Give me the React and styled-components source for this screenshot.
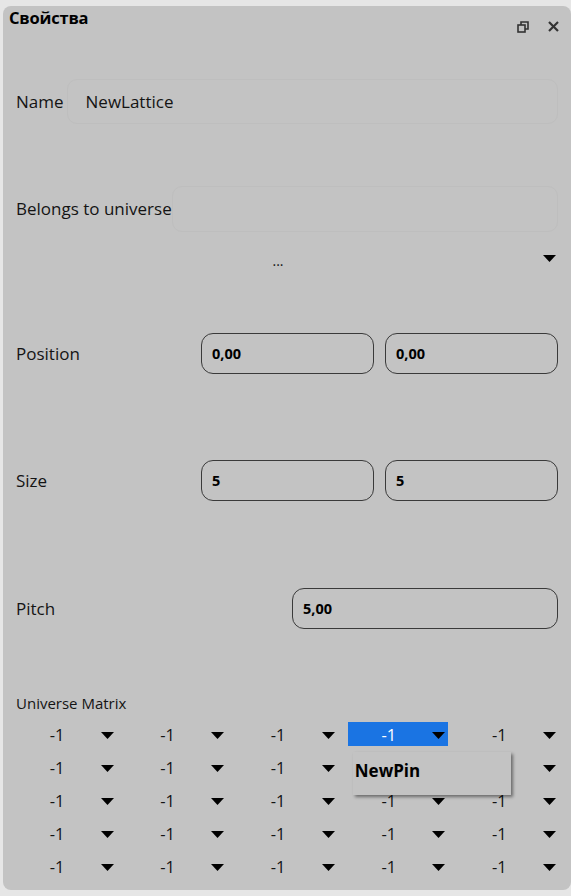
import styled, { createGlobalStyle } from 'styled-components';

const GlobalStyle = createGlobalStyle`
  html, body {
    margin: 0;
    padding: 0;
    background: #e6e6e6;
  }
  body {
    font-family: 'Open Sans', 'Noto Sans', sans-serif;
    color: #161616;
  }
`;

const matrix = [
  [-1, -1, -1, -1, -1],
  [-1, -1, -1, -1, -1],
  [-1, -1, -1, -1, -1],
  [-1, -1, -1, -1, -1],
  [-1, -1, -1, -1, -1],
];

function Arrow({ color = '#000' }) {
  return (
    <svg width="13" height="7" viewBox="0 0 13 7">
      <polygon points="0,0 13,0 6.5,7" fill={color} />
    </svg>
  );
}

function RestoreIcon() {
  return (
    <svg width="12" height="12" viewBox="0 0 12 12" fill="none" stroke="#333" strokeWidth="1.6">
      <rect x="1" y="4" width="7" height="7" />
      <polyline points="4,4 4,1 11,1 11,8 8,8" />
    </svg>
  );
}

function CloseIcon() {
  return (
    <svg width="11" height="11" viewBox="0 0 11 11" stroke="#333" strokeWidth="2.2">
      <line x1="1" y1="1" x2="10" y2="10" />
      <line x1="10" y1="1" x2="1" y2="10" />
    </svg>
  );
}

export default function App() {
  return (
    <>
      <GlobalStyle />
      <Panel>
        <Header>
          <Title>Свойства</Title>
          <HeaderButtons>
            <IconButton>
              <RestoreIcon />
            </IconButton>
            <IconButton>
              <CloseIcon />
            </IconButton>
          </HeaderButtons>
        </Header>

        <NameRow>
          <Label>Name</Label>
          <FaintBox>NewLattice</FaintBox>
        </NameRow>

        <BelongsRow>
          <Label>Belongs to universe</Label>
          <FaintBox />
        </BelongsRow>

        <ComboRow>
          <ComboText>...</ComboText>
          <ArrowBox>
            <Arrow />
          </ArrowBox>
        </ComboRow>

        <PairRow $top={58}>
          <Label>Position</Label>
          <Field>0,00</Field>
          <Field>0,00</Field>
        </PairRow>

        <PairRow $top={86}>
          <Label>Size</Label>
          <Field>5</Field>
          <Field>5</Field>
        </PairRow>

        <PitchRow>
          <Label>Pitch</Label>
          <Field>5,00</Field>
        </PitchRow>

        <MatrixLabel>Universe Matrix</MatrixLabel>

        <MatrixGrid>
          {matrix.map((row, r) =>
            row.map((value, c) => {
              const selected = r === 0 && c === 3;
              const covered = r === 1 && c === 3;
              return (
                <Cell key={`${r}-${c}`} $selected={selected}>
                  <CellValue $covered={covered}>{value}</CellValue>
                  <CellArrow>
                    <Arrow />
                  </CellArrow>
                  {selected && (
                    <Popup>
                      <PopupItem>NewPin</PopupItem>
                    </Popup>
                  )}
                </Cell>
              );
            })
          )}
        </MatrixGrid>
      </Panel>
    </>
  );
}

const Panel = styled.div`
  box-sizing: border-box;
  margin: 6px 0 0 3px;
  width: 568px;
  height: 884px;
  background: #c3c3c3;
  border-radius: 8px;
  padding: 0 13px 0 13px;
  display: flex;
  flex-direction: column;
`;

const Header = styled.div`
  height: 34px;
  margin: 0 -13px 0 -7px;
  display: flex;
  justify-content: space-between;
`;

const Title = styled.div`
  font-weight: 700;
  font-size: 16.5px;
  line-height: 22px;
  margin-top: 1px;
  color: #000;
  letter-spacing: -0.2px;
`;

const HeaderButtons = styled.div`
  display: flex;
  align-items: center;
  gap: 18px;
  padding: 7px 12px 0 0;
`;

const IconButton = styled.div`
  width: 12px;
  height: 12px;
  display: flex;
  align-items: center;
  justify-content: center;
`;

const Label = styled.div`
  font-size: 17px;
  line-height: 22px;
  white-space: nowrap;
  color: #141414;
`;

const NameRow = styled.div`
  margin-top: 39px;
  height: 45px;
  display: flex;
  align-items: center;
  gap: 3px;
`;

const BelongsRow = styled.div`
  margin-top: 62px;
  height: 46px;
  display: flex;
  align-items: center;
  gap: 0;
`;

const FaintBox = styled.div`
  flex: 1;
  height: 100%;
  box-sizing: border-box;
  border: 1px solid #bebebe;
  border-radius: 10px;
  display: flex;
  align-items: center;
  padding-left: 18px;
  font-size: 17px;
  color: #141414;
`;

const ComboRow = styled.div`
  margin-top: 13px;
  height: 30px;
  display: flex;
  align-items: center;
`;

const ComboText = styled.div`
  flex: 1;
  text-align: center;
  font-size: 14px;
  padding-right: 0;
`;

const ArrowBox = styled.div`
  width: 18px;
  display: flex;
  justify-content: center;
  padding-bottom: 4px;
`;

const PairRow = styled.div`
  margin-top: ${(p) => p.$top}px;
  height: 41px;
  display: grid;
  grid-template-columns: 174px 1fr 1fr;
  column-gap: 11px;
  align-items: center;
`;

const PitchRow = styled.div`
  margin-top: 87px;
  height: 41px;
  display: grid;
  grid-template-columns: 265px 1fr;
  column-gap: 11px;
  align-items: center;
`;

const Field = styled.div`
  box-sizing: border-box;
  height: 41px;
  border: 1.5px solid #3a3a3a;
  border-radius: 12px;
  display: flex;
  align-items: center;
  padding-left: 10px;
  font-weight: 700;
  font-size: 14.5px;
  color: #000;
`;

const MatrixLabel = styled.div`
  margin-top: 63px;
  font-size: 15px;
  line-height: 22px;
  color: #141414;
`;

const MatrixGrid = styled.div`
  margin-top: 8px;
  display: grid;
  grid-template-columns: repeat(5, 100px);
  column-gap: 10.6px;
  row-gap: 9px;
`;

const Cell = styled.div`
  position: relative;
  height: 24px;
  display: flex;
  align-items: center;
  background: ${(p) => (p.$selected ? '#1a74e3' : 'transparent')};
  color: ${(p) => (p.$selected ? '#fff' : '#141414')};
`;

const CellValue = styled.div`
  width: 82px;
  text-align: center;
  font-size: 16.5px;
  visibility: ${(p) => (p.$covered ? 'hidden' : 'visible')};
`;

const CellArrow = styled.div`
  width: 18px;
  display: flex;
  justify-content: center;
  padding-top: 2px;
`;

const Popup = styled.div`
  position: absolute;
  left: 5px;
  top: 30px;
  width: 158px;
  height: 43px;
  background: #c3c3c3;
  box-shadow: 2px 2px 3px rgba(0, 0, 0, 0.45);
  z-index: 2;
`;

const PopupItem = styled.div`
  padding: 7px 0 0 2px;
  font-weight: 700;
  font-size: 17px;
  color: #000;
`;
